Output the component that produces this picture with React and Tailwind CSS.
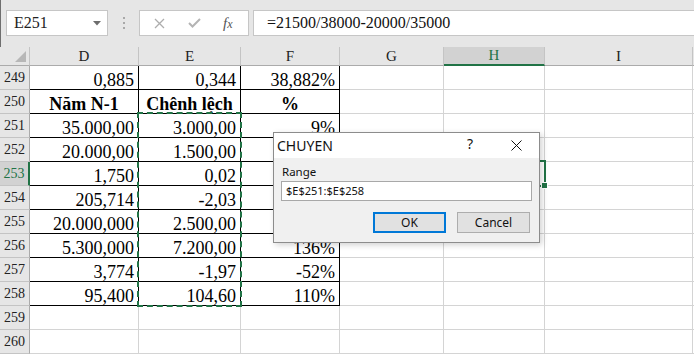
import React from "react";

const serif = { fontFamily: '"Liberation Serif", "Times New Roman", serif' };
const ui = { fontFamily: '"Noto Sans", "Open Sans", sans-serif' };

const columns = ["D", "E", "F", "G", "H", "I"];

const rows = [
  { n: 249, d: "0,885", e: "0,344", f: "38,882%" },
  { n: 250, d: "Năm N-1", e: "Chênh lệch", f: "%", bold: true },
  { n: 251, d: "35.000,00", e: "3.000,00", f: "9%" },
  { n: 252, d: "20.000,00", e: "1.500,00", f: "8%" },
  { n: 253, d: "1,750", e: "0,02", f: "1%", h: "-0,005" },
  { n: 254, d: "205,714", e: "-2,03", f: "-1%" },
  { n: 255, d: "20.000,000", e: "2.500,00", f: "13%" },
  { n: 256, d: "5.300,000", e: "7.200,00", f: "136%" },
  { n: 257, d: "3,774", e: "-1,97", f: "-52%" },
  { n: 258, d: "95,400", e: "104,60", f: "110%" },
  { n: 259 },
  { n: 260 },
];

function Toolbar() {
  return (
    <div className="h-[47px] bg-[#e6e6e6] border-l border-[#6f6f6f] flex items-start pt-[10px]">
      {/* name box */}
      <div className="ml-[5px] w-[102px] h-[26px] bg-white border border-[#c6c6c6] flex items-center justify-between pl-[7px] pr-[6px]">
        <span className="text-[16px] leading-none text-[#222]" style={serif}>
          E251
        </span>
        <svg width="8" height="5" viewBox="0 0 8 5">
          <path d="M0 0 L8 0 L4 4.5 Z" fill="#6d6d6d" />
        </svg>
      </div>
      {/* grip dots */}
      <div className="w-[31px] h-[26px] flex flex-col items-center justify-center gap-[3px]">
        <span className="w-[2px] h-[2px] bg-[#a8a8a8]" />
        <span className="w-[2px] h-[2px] bg-[#a8a8a8]" />
        <span className="w-[2px] h-[2px] bg-[#a8a8a8]" />
      </div>
      {/* cancel / enter / fx */}
      <div className="w-[110px] h-[26px] bg-white border border-[#c6c6c6] flex items-center">
        <svg className="ml-[14px]" width="11" height="11" viewBox="0 0 11 11">
          <path d="M1 1 L10 10 M10 1 L1 10" stroke="#adadad" strokeWidth="1.3" />
        </svg>
        <svg className="ml-[23px]" width="13" height="10" viewBox="0 0 13 10">
          <path d="M1 5 L4.5 8.5 L12 1" stroke="#b4b4b4" strokeWidth="2" fill="none" />
        </svg>
        <span
          className="ml-[22px] text-[15px] italic leading-none text-[#555]"
          style={serif}
        >
          f<span className="text-[12px]">x</span>
        </span>
      </div>
      {/* formula input */}
      <div className="ml-[4px] flex-1 h-[26px] bg-white border-y border-l border-[#c6c6c6] flex items-center pl-[13px]">
        <span className="text-[16px] leading-none text-[#111]" style={serif}>
          =21500/38000-20000/35000
        </span>
      </div>
    </div>
  );
}

function HeaderRow() {
  return (
    <>
      <div className="h-[19px] bg-[#e6e6e6] border-r border-r-[#c4c4c4] border-b border-b-[#ababab] relative">
        <svg
          className="absolute left-[15px] top-[4px]"
          width="11"
          height="11"
          viewBox="0 0 11 11"
        >
          <path d="M11 0 L11 11 L0 11 Z" fill="#b7b7b7" />
        </svg>
      </div>
      {columns.map((c) => {
        const active = c === "H";
        return (
          <div
            key={c}
            className={
              active
                ? "h-[19px] bg-[#d2d2d2] border-r border-r-[#c4c4c4] border-b-2 border-b-[#217346] flex items-center justify-center text-[15px] text-[#217346]"
                : "h-[19px] bg-[#e6e6e6] border-r border-r-[#c4c4c4] border-b border-b-[#ababab] flex items-center justify-center text-[15px] text-[#222]"
            }
            style={serif}
          >
            {c}
          </div>
        );
      })}
      <div className="h-[19px] bg-[#e6e6e6] border-b border-b-[#ababab]" />
    </>
  );
}

function Cell({ value, inTable, bold }) {
  const border = inTable
    ? "border-r border-b border-black"
    : "border-r border-b border-[#d4d4d4]";
  const align = bold ? "justify-center font-bold" : "justify-end pr-[4px]";
  return (
    <div
      className={`h-[24px] ${border} flex items-end ${align} text-[18px] leading-[18px] text-black whitespace-nowrap`}
      style={serif}
    >
      {value}
    </div>
  );
}

function DataRow({ row }) {
  const inTable = row.n <= 258;
  const active = row.n === 253;
  return (
    <>
      <div
        className={
          active
            ? "h-[24px] bg-[#d2d2d2] border-r-2 border-r-[#217346] border-b border-b-[#c4c4c4] flex items-center justify-center text-[14px] text-[#217346]"
            : "h-[24px] bg-[#e6e6e6] border-r border-r-[#ababab] border-b border-b-[#c4c4c4] flex items-center justify-center text-[14px] text-[#222]"
        }
        style={serif}
      >
        {row.n}
      </div>
      <Cell value={row.d} inTable={inTable} bold={row.bold} />
      <Cell value={row.e} inTable={inTable} bold={row.bold} />
      <Cell value={row.f} inTable={inTable} bold={row.bold} />
      <Cell value="" />
      <Cell value={row.h || ""} />
      <Cell value="" />
      <div className="h-[24px] border-b border-[#d4d4d4]" />
    </>
  );
}

function RangeDialog() {
  return (
    <div
      className="absolute left-[273px] top-[132px] w-[267px] h-[111px] bg-[#f0f0f0] border border-[#8c8c8c] shadow-[2px_2px_6px_rgba(0,0,0,0.18)] flex flex-col"
      style={ui}
    >
      <div className="h-[25px] bg-white flex items-center pl-[3px] relative">
        <span className="text-[14px] text-[#111] leading-none">CHUYEN</span>
        <span className="absolute left-[193px] top-[4px] text-[14px] text-[#111] leading-none">
          ?
        </span>
        <svg
          className="absolute left-[237px] top-[7px]"
          width="11"
          height="11"
          viewBox="0 0 11 11"
        >
          <path d="M0.5 0.5 L10.5 10.5 M10.5 0.5 L0.5 10.5" stroke="#111" strokeWidth="1" />
        </svg>
      </div>
      <div className="flex-1 px-[7px] pt-[7px]">
        <div className="text-[11.5px] leading-[14px] text-[#111] pl-[1px]">Range</div>
        <div className="mt-[2px] h-[20px] bg-white border border-[#a8a8a8] flex items-center pl-[4px] text-[11px] text-[#111]">
          $E$251:$E$258
        </div>
        <div className="mt-[11px] flex justify-end gap-[11px] pr-[2px]">
          <div className="w-[73px] h-[21px] bg-[#e1e1e1] border-2 border-[#0078d7] flex items-center justify-center text-[12px] text-[#111]">
            OK
          </div>
          <div className="w-[73px] h-[21px] bg-[#e1e1e1] border border-[#adadad] flex items-center justify-center text-[12px] text-[#111]">
            Cancel
          </div>
        </div>
      </div>
    </div>
  );
}

export default function App() {
  return (
    <div className="w-[694px] h-[356px] overflow-hidden bg-white relative">
      <Toolbar />
      <div className="grid grid-cols-[30px_109px_102px_99px_104px_101px_148px_1fr]">
        <HeaderRow />
        {rows.map((r) => (
          <DataRow key={r.n} row={r} />
        ))}
      </div>

      {/* copy marquee around E251:E258 */}
      <div className="absolute left-[137px] top-[112px] w-[105px] h-[195px] border-2 border-dashed border-[#217346]" />

      {/* active cell H253 */}
      <div className="absolute left-[443px] top-[160px] w-[103px] h-[27px] border-2 border-[#217346]" />
      <div className="absolute left-[541px] top-[182px] w-[7px] h-[7px] bg-[#217346] border border-white" />

      <RangeDialog />
    </div>
  );
}
